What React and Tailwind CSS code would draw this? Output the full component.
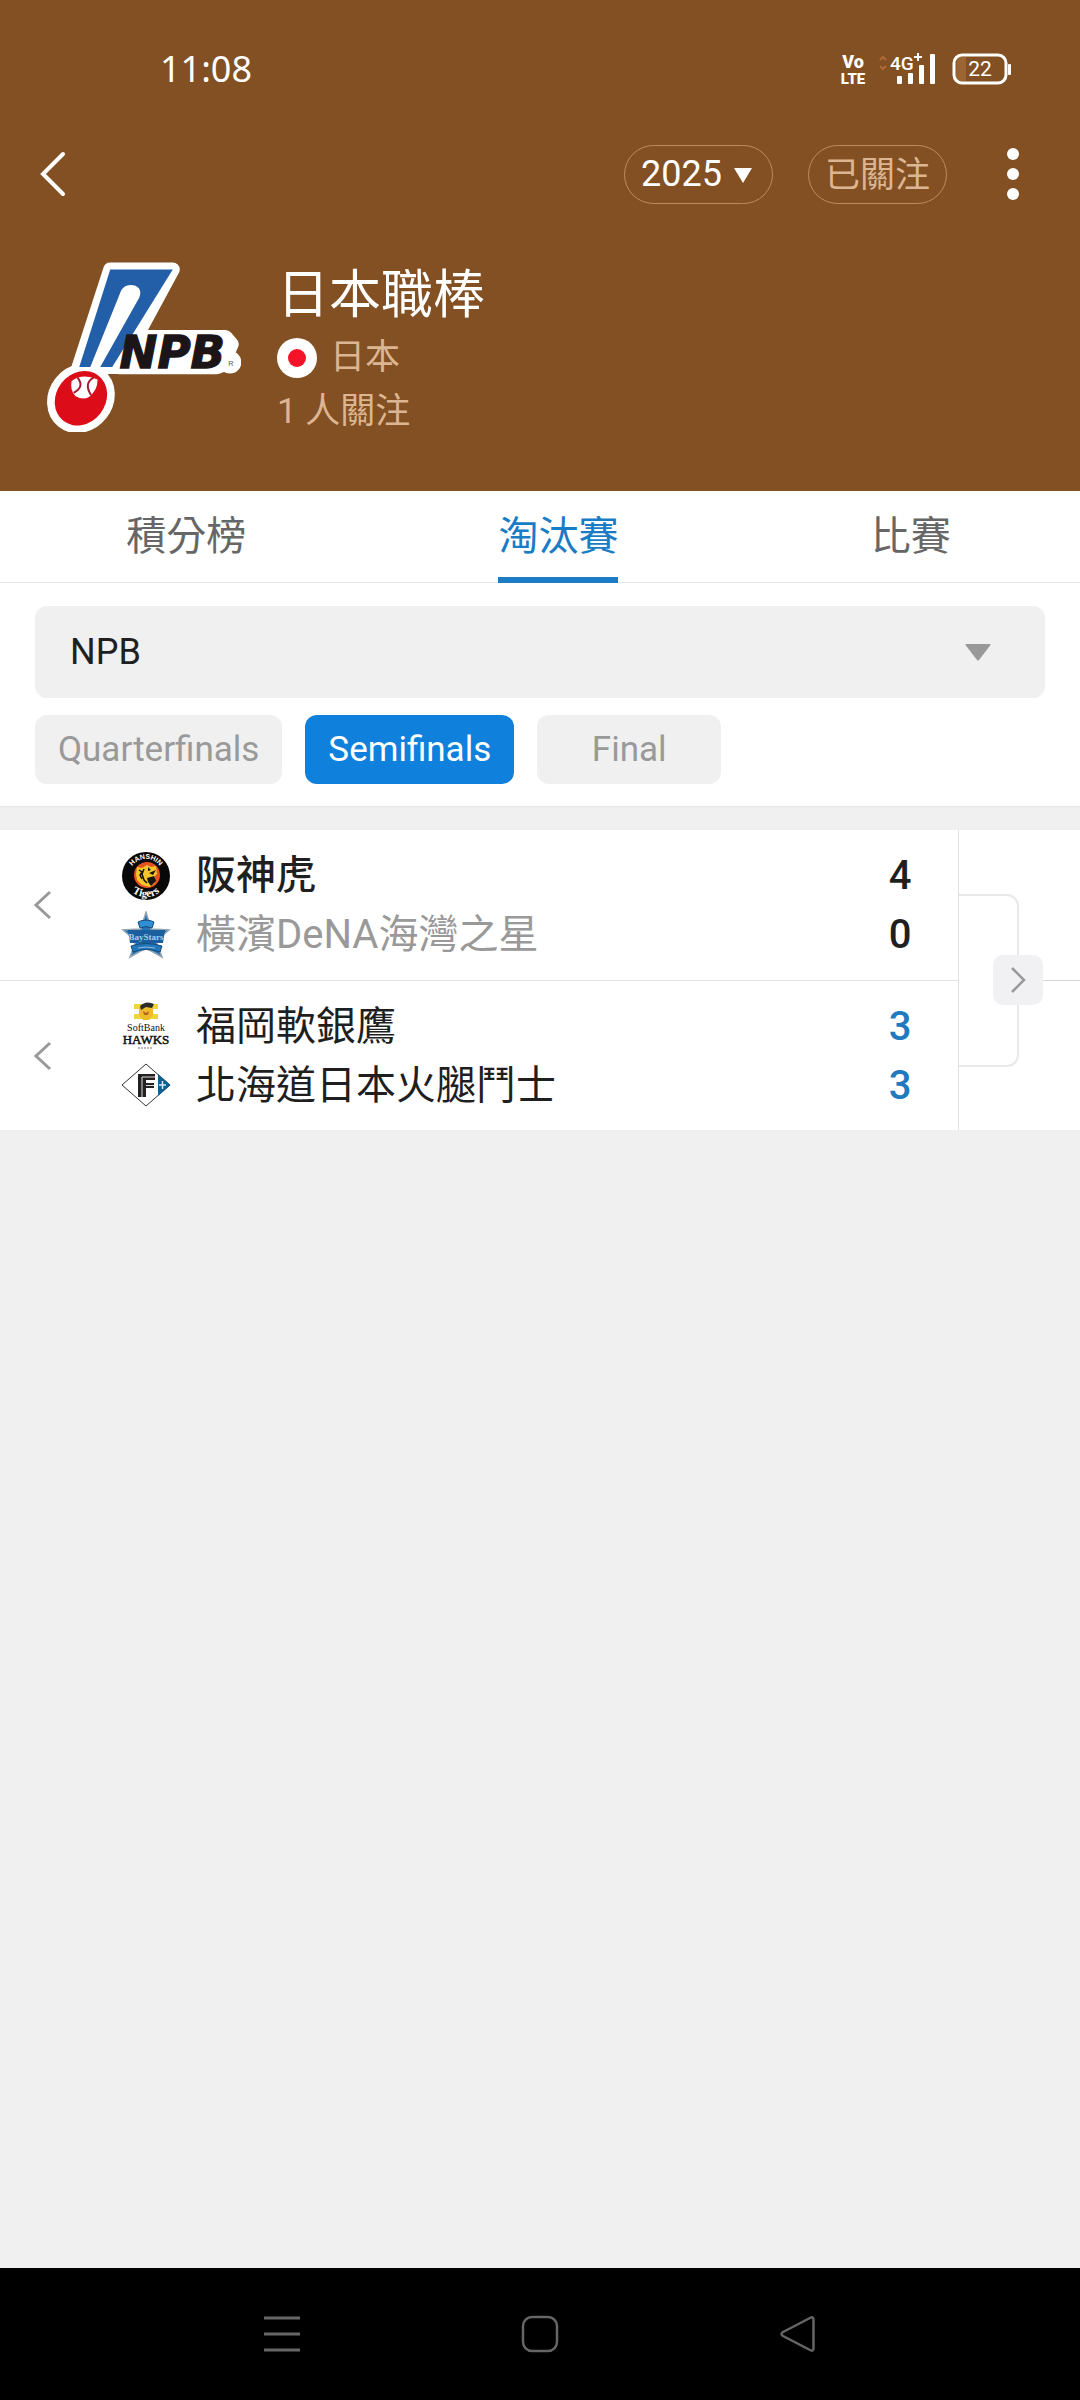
import React, { useState } from "react";

const TABS = [
  { key: "standings", label: "積分榜" },
  { key: "knockout",  label: "淘汰賽" },
  { key: "matches",   label: "比賽" },
];

const ROUNDS = ["Quarterfinals", "Semifinals", "Final"];

/* ---------- logos ---------- */

const NpbLogo = () => (
  <svg viewBox="80 65 583 510" className="w-[194px] h-[170px]" role="img" aria-label="NPB">
    <g stroke="#fff" strokeLinejoin="round" fill="#fff">
      <path d="M270 87H458L352 283L296 380H175Z" strokeWidth="42" />
      <ellipse cx="182" cy="474" rx="74" ry="86" transform="rotate(38 182 474)" strokeWidth="46" />
      <path d="M334 291H616L634 312L606 374L590 380H296Z" strokeWidth="44" />
      <circle cx="630" cy="366" r="14" strokeWidth="40" />
    </g>
    <path d="M270 87H458L276 380H240L357 172C368 148 352 134 332 134C312 134 304 146 298 162L210 380H177Z" fill="#235ea8" />
    <ellipse cx="182" cy="474" rx="74" ry="86" transform="rotate(38 182 474)" fill="#dc0d19" />
    <path d="M154 422Q188 398 232 418Q232 452 206 470Q188 480 166 468Q148 450 154 422Z" fill="#fff" />
    <path d="M172 412Q194 440 160 458" fill="none" stroke="#a81830" strokeWidth="6" />
    <path d="M220 412Q190 428 212 464" fill="none" stroke="#a81830" strokeWidth="6" />
    <text x="298" y="382" fontFamily="DejaVu Sans" fontWeight="700" fontStyle="italic" fontSize="136" fill="#1c1517" stroke="#1c1517" strokeWidth="4">NPB</text>
    <text x="625" y="376" fontFamily="Liberation Sans" fontSize="22" fill="#555">R</text>
  </svg>
);

const TigersLogo = () => (
  <svg viewBox="0 0 48 48" className="w-[50px] h-[48px]" aria-hidden="true">
    <defs>
      <path id="tigers-top" d="M7 24A17 17 0 0 1 41 24" />
      <path id="tigers-bottom" d="M2 23A22 22 0 0 0 46 23" />
    </defs>
    <circle cx="24" cy="24" r="24" fill="#080808" />
    <circle cx="25" cy="23" r="13" fill="#e8521c" />
    <path d="M15 15l5 1 5-3 4 2 5-1 1 8-3 3 1 6-5 4-8-2-5-5-1-6z" fill="#f6c62a" />
    <path d="M17 18l3 2-2 3 2 4M22 17l-2 5 2 6 3 3" fill="none" stroke="#111" strokeWidth="1.500" />
    <path d="M26 15l3 3-3 1zM27 21l7-3-3 5zM25 26l7-2 2 5-5 5-3-4z" fill="#161616" />
    <text fontFamily="Liberation Sans" fontWeight="700" fontSize="7" fill="#fff" textAnchor="middle">
      <textPath href="#tigers-top" startOffset="50%">HANSHIN</textPath>
    </text>
    <text fontFamily="Liberation Serif" fontWeight="700" fontSize="11" fill="#fff" textAnchor="middle">
      <textPath href="#tigers-bottom" startOffset="50%">Tigers</textPath>
    </text>
  </svg>
);

const BayStarsLogo = () => (
  <svg viewBox="0 0 48 48" className="w-[50px] h-[48px]" aria-hidden="true">
    <path d="M24 1l5 17 18 1-13 11 6 16-16-9-16 9 6-16L1 19l18-1z" fill="#2475b8" stroke="#93a4b1" strokeWidth="1.500" />
    <path d="M16 11q8-4 16 0l-2 6q-6-3-12 0z" fill="#2f8fd2" stroke="#134a7c" strokeWidth="1" />
    <path d="M6 19h37l-2 13H8z" fill="#1b5f9e" />
    <text x="24" y="29" fontFamily="Liberation Serif" fontWeight="700" fontSize="9" fill="#a9cbe6" textAnchor="middle">BayStars</text>
    <path d="M9 35q15-5 31 0l-2 6q-14-5-27 0z" fill="#2277ba" stroke="#134a7c" strokeWidth="1" />
    <path d="M16 37q8-2 17 0" fill="none" stroke="#8fbbdc" strokeWidth="1" />
  </svg>
);

const HawksLogo = () => (
  <svg viewBox="0 0 48 48" className="w-[50px] h-[48px]" aria-hidden="true">
    <path d="M12 2h24v5H12zM12 12h24v5H12z" fill="#f0d53a" />
    <path d="M17 5q7-5 14 0v8l-4 5h-6l-4-5z" fill="#eebb2a" />
    <path d="M18 4q6-6 14-2l-2 4-6-1-5 3z" fill="#2c2c2c" />
    <path d="M21 9l3 2 3-2-1 4h-4z" fill="#b5651d" />
    <text x="24" y="29" fontFamily="Liberation Serif" fontSize="10" fill="#111" textAnchor="middle">SoftBank</text>
    <text x="24" y="42" fontFamily="Liberation Serif" fontSize="13" fill="#111" stroke="#111" strokeWidth="0.500" textAnchor="middle">HAWKS</text>
    <path d="M16 46h15" stroke="#777" strokeWidth="1" strokeDasharray="2 1" />
  </svg>
);

const FightersLogo = () => (
  <svg viewBox="0 0 50 44" className="w-[50px] h-[44px]" aria-hidden="true">
    <path d="M1 22L25 1L49 22L25 43Z" fill="#fff" stroke="#333" strokeWidth="1" />
    <path d="M37 11L49.500 22L37 33Z" fill="#11608f" />
    <path d="M41.500 18v8M38 22h7" stroke="#d4ecf7" strokeWidth="1.500" />
    <path d="M17 11H34V17H25V20H33V25H25V34H17Z" fill="#222" />
    <path d="M21 34V14H34M25 22.500H33" fill="none" stroke="#ddd" strokeWidth="1" />
  </svg>
);

const MATCHES = [
  {
    id: "central",
    teams: [
      { name: "阪神虎", score: 4, Logo: TigersLogo, nameClass: "font-medium text-[#1f1f1f]", scoreClass: "text-[#1f1f1f]" },
      { name: "橫濱DeNA海灣之星", score: 0, Logo: BayStarsLogo, nameClass: "text-[#999999]", scoreClass: "text-[#1f1f1f]" },
    ],
  },
  {
    id: "pacific",
    teams: [
      { name: "福岡軟銀鷹", score: 3, Logo: HawksLogo, nameClass: "text-[#1f1f1f]", scoreClass: "text-[#1f7abf]" },
      { name: "北海道日本火腿鬥士", score: 3, Logo: FightersLogo, nameClass: "text-[#1f1f1f]", scoreClass: "text-[#1f7abf]" },
    ],
  },
];

/* ---------- pieces ---------- */

const StatusBar = () => (
  <div className="flex items-center justify-between h-[138px] pl-[160px] pr-[68px]">
    <span className="font-['Noto_Sans'] text-[36px] leading-none">11:08</span>
    <div className="flex items-center">
      <svg viewBox="0 0 36 40" className="w-[36px] h-[40px] mr-[8px]" fill="#fff" fontFamily="Roboto" fontWeight="900" aria-label="VoLTE">
        <text x="18" y="19" fontSize="18" textAnchor="middle">Vo</text>
        <text x="18" y="35" fontSize="15" textAnchor="middle">LTE</text>
      </svg>
      <svg viewBox="0 0 56 32" className="w-[56px] h-[32px] mr-[17px]" fill="#fff" aria-label="4G+">
        <path d="M1 7l3-3 3 3M1 13l3 3 3-3" fill="none" stroke="#b06a35" strokeWidth="2" />
        <text x="11" y="17" fontFamily="Roboto" fontWeight="500" fontSize="19">4G</text>
        <path d="M39 0v8M35 4h8" stroke="#fff" strokeWidth="2" />
        <rect x="18" y="23" width="5" height="8" rx="1" />
        <rect x="29" y="20" width="5" height="11" rx="1" />
        <rect x="40" y="12" width="5" height="19" rx="1" />
        <rect x="51" y="1" width="5" height="30" rx="1" />
      </svg>
      <svg viewBox="0 0 60 32" className="w-[60px] h-[32px]" fill="none" aria-label="22%">
        <path d="M5 4h9v24H9q-5 0-5-5z" fill="#9a6533" />
        <rect x="2" y="2" width="52" height="28" rx="8" stroke="#fff" strokeWidth="3" />
        <rect x="56" y="11" width="3" height="11" rx="1" fill="#fff" />
        <text x="28" y="23" fontFamily="Roboto" fontSize="21" fill="#fff" textAnchor="middle">22</text>
      </svg>
    </div>
  </div>
);

const TeamRow = ({ team }) => (
  <div className="flex items-center h-[59px]">
    <div className="w-[50px] flex justify-center flex-shrink-0"><team.Logo /></div>
    <span className={`ml-[25px] flex-1 text-[40px] leading-[59px] truncate ${team.nameClass}`}>{team.name}</span>
    <span className={`w-[24px] text-center text-[40px] leading-[59px] font-medium ${team.scoreClass}`}>{team.score}</span>
  </div>
);

const MatchRow = ({ match }) => (
  <li className="flex items-center h-[150px] border-t border-[#e2e2e2] first:border-t-0">
    <button aria-label="上一輪" className="w-[121px] self-stretch pl-[32px] flex items-center flex-shrink-0">
      <svg viewBox="0 0 20 32" className="w-[20px] h-[32px]" fill="none" stroke="#999" strokeWidth="3">
        <path d="M18 3L4 16L18 29" />
      </svg>
    </button>
    <div className="flex-1 min-w-0 pr-[46px]">
      {match.teams.map(t => <TeamRow key={t.name} team={t} />)}
    </div>
  </li>
);

const App = () => {
  const [tab, setTab]     = useState("knockout");
  const [round, setRound] = useState("Semifinals");

  return (
    <div className="min-h-screen flex flex-col bg-[#f0f0f0] font-[Roboto,'Noto_Sans_CJK_TC',sans-serif]">
      {/* HEADER */}
      <header className="bg-[#825022] text-white pb-[56px]">
        <StatusBar />
        <div className="flex items-center h-[72px] pl-[38px] pr-[61px]">
          <button aria-label="返回">
            <svg viewBox="0 0 30 50" className="w-[30px] h-[50px]" fill="none" stroke="#fff" strokeWidth="4" strokeLinecap="round">
              <path d="M25 5L5 25L25 45" />
            </svg>
          </button>
          <div className="relative ml-auto mr-[35px]">
            <select aria-label="賽季" defaultValue="2025" className="appearance-none block w-[149px] h-[59px] pl-[16px] rounded-full border border-[#c08a5c] bg-transparent text-[36px] leading-none text-white">
              <option>2025</option>
              <option>2024</option>
            </select>
            <svg viewBox="0 0 18 15" className="absolute right-[21px] top-[23px] w-[18px] h-[15px] pointer-events-none" fill="#fff">
              <path d="M0 0H18L9 15Z" />
            </svg>
          </div>
          <button className="w-[139px] h-[59px] rounded-full border border-[#c08a5c] text-[35px] leading-[59px] text-[#dcb593]">已關注</button>
          <button aria-label="更多" className="ml-[60px]">
            <svg viewBox="0 0 12 54" className="w-[12px] h-[54px]" fill="#fff">
              <circle cx="6" cy="7" r="6" />
              <circle cx="6" cy="27" r="6" />
              <circle cx="6" cy="47" r="6" />
            </svg>
          </button>
        </div>

        <div className="flex items-start mt-[52px] pl-[47px]">
          <NpbLogo />
          <div className="ml-[36px] pt-[2px]">
            <h1 className="text-[52px] leading-[64px]">日本職棒</h1>
            <div className="flex items-center h-[60px] text-[35px] text-[#dcb593]">
              <svg viewBox="0 0 40 40" className="w-[40px] h-[40px] mr-[13px]" aria-hidden="true">
                <circle cx="20" cy="20" r="20" fill="#fff" />
                <circle cx="20" cy="20" r="9" fill="#f5132a" />
              </svg>
              日本
            </div>
            <p className="text-[35px] leading-[47px] text-[#dcb593]">1 人關注</p>
          </div>
        </div>
      </header>

      {/* TABS */}
      <nav className="flex h-[92px] pr-[3px] bg-white border-b border-[#e6e6e6]">
        {TABS.map(t => (
          <button key={t.key} onClick={() => setTab(t.key)} className="flex-auto flex justify-center text-[40px]">
            <span className={`h-[92px] leading-[92px] border-b-[6px] ${tab === t.key ? "text-[#1a7cc4] border-[#1a7cc4]" : "text-[#666] border-transparent"}`}>
              {t.label}
            </span>
          </button>
        ))}
      </nav>

      {/* FILTERS */}
      <section className="bg-white border-b border-[#e6e6e6] px-[35px] pt-[23px] pb-[22px]">
        <div className="relative">
          <select aria-label="聯賽" defaultValue="NPB" className="appearance-none block w-full h-[92px] px-[35px] rounded-xl bg-[#f0f0f0] text-[36px] text-[#1f1f1f]">
            <option>NPB</option>
          </select>
          <svg viewBox="0 0 26 17" className="absolute right-[54px] top-[38px] w-[26px] h-[17px] pointer-events-none" fill="#999">
            <path d="M1 0H25Q26 0 25.500 1L14 16Q13 17 12 16L0.500 1Q0 0 1 0Z" />
          </svg>
        </div>
        <div className="flex gap-[23px] mt-[17px]">
          {ROUNDS.map(r => (
            <button key={r} onClick={() => setRound(r)}
              className={`h-[69px] min-w-[184px] px-[23px] rounded-xl text-[35px] leading-none ${
                round === r ? "bg-[#0f80dc] text-white" : "bg-[#f0f0f0] text-[#999]"
              }`}>
              {r}
            </button>
          ))}
        </div>
      </section>

      {/* BRACKET */}
      <section className="flex mt-[23px] bg-white">
        <ul className="flex-1 min-w-0 border-r border-[#e2e2e2]">
          {MATCHES.map(m => <MatchRow key={m.id} match={m} />)}
        </ul>
        <div className="relative w-[121px] flex items-center">
          <div className="w-[60px] h-[173px] border-2 border-l-0 border-[#e8e8e8] rounded-r-xl" />
          <div className="flex-1 border-t border-[#d8d8d8]" />
          <button aria-label="下一輪" className="absolute left-[34px] top-[125px] w-[50px] h-[50px] rounded-[10px] bg-[#f1f1f3] flex items-center justify-center">
            <svg viewBox="0 0 16 26" className="w-[16px] h-[26px]" fill="none" stroke="#999" strokeWidth="2.500">
              <path d="M2 1L14 13L2 25" />
            </svg>
          </button>
        </div>
      </section>

      {/* SYSTEM NAV */}
      <footer className="mt-auto h-[132px] bg-black flex items-center justify-between px-[263px]">
        <button aria-label="最近使用">
          <svg viewBox="0 0 38 38" className="w-[38px] h-[38px]" stroke="#666" strokeWidth="3"><path d="M1 3H37M1 19H37M1 35H37" /></svg>
        </button>
        <button aria-label="主畫面">
          <svg viewBox="0 0 38 38" className="w-[38px] h-[38px]" fill="none" stroke="#666" strokeWidth="2.500"><rect x="2" y="2" width="34" height="34" rx="9" /></svg>
        </button>
        <button aria-label="返回上頁">
          <svg viewBox="0 0 38 38" className="w-[38px] h-[38px]" fill="none" stroke="#666" strokeWidth="2.500" strokeLinejoin="round">
            <path d="M31 3Q34.500 1 34.500 5V33Q34.500 37 31 35L4 21Q1 19 4 17Z" />
          </svg>
        </button>
      </footer>
    </div>
  );
};

export default App;
